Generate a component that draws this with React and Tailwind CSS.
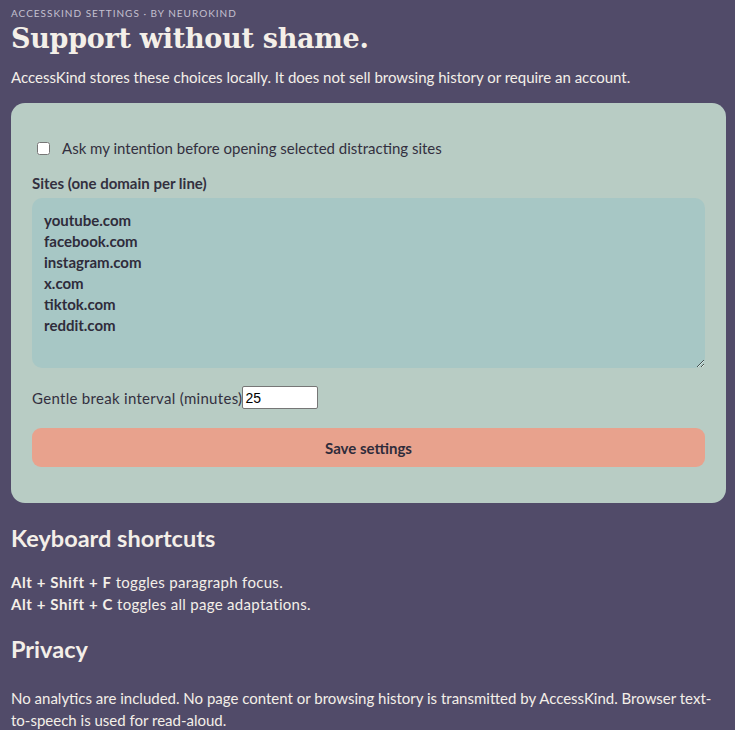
export default function App() {
  const sites = ['youtube.com', 'facebook.com', 'instagram.com', 'x.com', 'tiktok.com', 'reddit.com'].join('\n');

  return (
    <div className="h-screen overflow-hidden bg-[#514b69] pl-[11px] pr-[9px] text-[15px] leading-[22px] text-[#f4efe8] [font-family:Lato,'Noto_Sans',sans-serif]">
      <div className="pt-[6px] text-[10px] uppercase leading-[14px] tracking-[0.1em] text-[#c4c0d0]">AccessKind settings · by NeuroKind</div>
      <h1 className="mt-[2px] text-[27px] font-bold leading-[34px] tracking-[-0.01em] [font-family:'DejaVu_Serif',Georgia,serif]">Support without shame.</h1>
      <p className="mt-[10px]">AccessKind stores these choices locally. It does not sell browsing history or require an account.</p>

      <div className="mt-[15px] rounded-[14px] bg-[#b8ccc4] px-[21px] pb-[36px] pt-[34px] text-[#33303f]">
        <label className="flex items-center gap-[12px] pl-[5px]">
          <input type="checkbox" className="h-[13px] w-[13px] accent-white" />
          <span>Ask my intention before opening selected distracting sites</span>
        </label>

        <div className="mt-[13px] font-bold">Sites (one domain per line)</div>
        <textarea
          defaultValue={sites}
          rows={7}
          className="mt-[4px] block h-[170px] w-full resize-y rounded-[10px] bg-[#a7c7c5] px-[12px] py-[12px] text-[15px] font-bold leading-[21px] text-[#2f2c3b] outline-none"
        />

        <label className="mt-[18px] flex items-center">
          <span className="tracking-[0.02em]">Gentle break interval (minutes)</span>
          <input
            type="number"
            defaultValue={25}
            className="h-[23px] w-[76px] rounded-[2px] border border-[#767676] bg-white px-[2px] text-[14px] text-black [font-family:'Liberation_Sans',Arial,sans-serif]"
          />
        </label>

        <button className="mt-[19px] h-[39px] w-full rounded-[9px] bg-[#e8a28d] font-bold text-[#2f2c3b]">Save settings</button>
      </div>

      <h2 className="mt-[20px] text-[23.5px] font-bold leading-[30px]">Keyboard shortcuts</h2>
      <p className="mt-[18px] tracking-[0.02em]">
        <b className="tracking-[0.04em]">Alt + Shift + F</b> toggles paragraph focus.<br />
        <b className="tracking-[0.04em]">Alt + Shift + C</b> toggles all page adaptations.
      </p>
      <h2 className="mt-[19px] text-[23.5px] font-bold leading-[30px]">Privacy</h2>
      <p className="mt-[23px]">No analytics are included. No page content or browsing history is transmitted by AccessKind. Browser text-to-speech is used for read-aloud.</p>
    </div>
  );
}
